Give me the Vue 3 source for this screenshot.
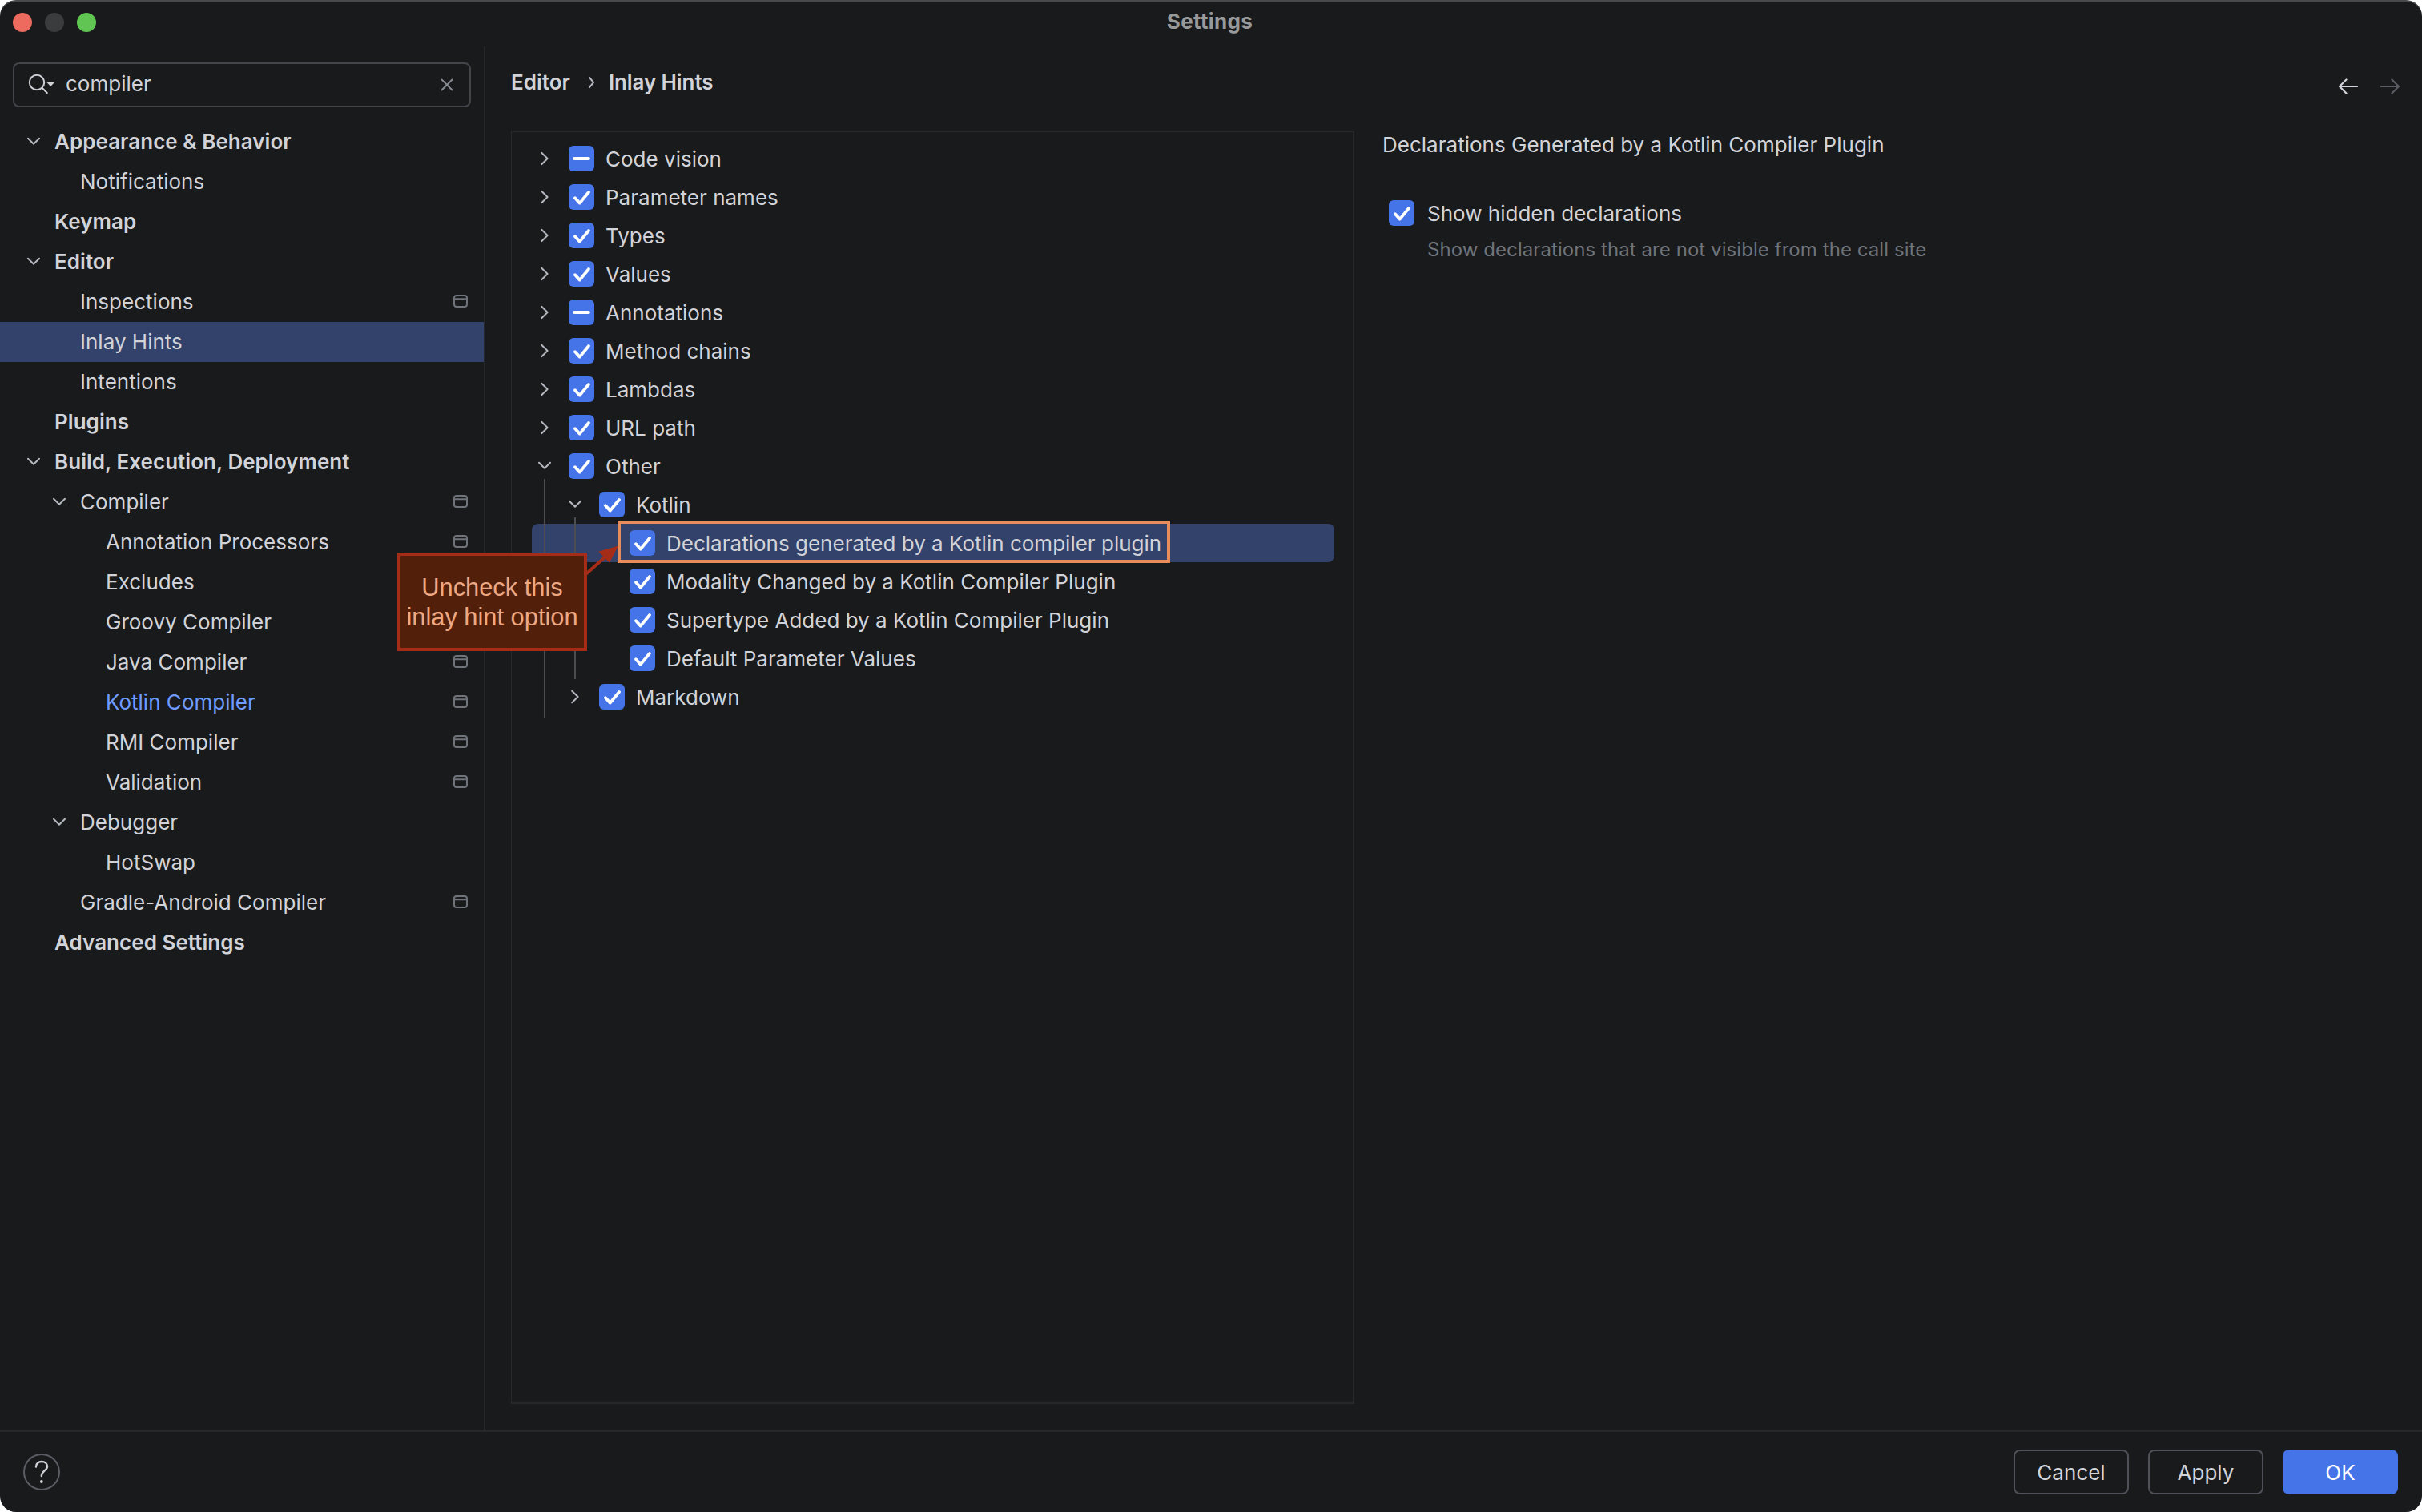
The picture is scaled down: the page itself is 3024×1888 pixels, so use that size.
<script setup>
import { ref } from 'vue'

const query = ref('compiler')

const pages = [
  { label: 'Appearance & Behavior', level: 0, open: true },
  { label: 'Notifications', level: 1 },
  { label: 'Keymap', level: 0 },
  { label: 'Editor', level: 0, open: true },
  { label: 'Inspections', level: 1, project: true },
  { label: 'Inlay Hints', level: 1, selected: true },
  { label: 'Intentions', level: 1 },
  { label: 'Plugins', level: 0 },
  { label: 'Build, Execution, Deployment', level: 0, open: true },
  { label: 'Compiler', level: 1, open: true, project: true },
  { label: 'Annotation Processors', level: 2, project: true },
  { label: 'Excludes', level: 2, project: true },
  { label: 'Groovy Compiler', level: 2, project: true },
  { label: 'Java Compiler', level: 2, project: true },
  { label: 'Kotlin Compiler', level: 2, project: true, match: true },
  { label: 'RMI Compiler', level: 2, project: true },
  { label: 'Validation', level: 2, project: true },
  { label: 'Debugger', level: 1, open: true },
  { label: 'HotSwap', level: 2 },
  { label: 'Gradle-Android Compiler', level: 1, project: true },
  { label: 'Advanced Settings', level: 0 },
]

const hints = [
  { label: 'Code vision', level: 0, arrow: 'right', state: 'mixed' },
  { label: 'Parameter names', level: 0, arrow: 'right', state: 'on' },
  { label: 'Types', level: 0, arrow: 'right', state: 'on' },
  { label: 'Values', level: 0, arrow: 'right', state: 'on' },
  { label: 'Annotations', level: 0, arrow: 'right', state: 'mixed' },
  { label: 'Method chains', level: 0, arrow: 'right', state: 'on' },
  { label: 'Lambdas', level: 0, arrow: 'right', state: 'on' },
  { label: 'URL path', level: 0, arrow: 'right', state: 'on' },
  { label: 'Other', level: 0, arrow: 'down', state: 'on' },
  { label: 'Kotlin', level: 1, arrow: 'down', state: 'on' },
  { label: 'Declarations generated by a Kotlin compiler plugin', level: 2, state: 'on', selected: true },
  { label: 'Modality Changed by a Kotlin Compiler Plugin', level: 2, state: 'on' },
  { label: 'Supertype Added by a Kotlin Compiler Plugin', level: 2, state: 'on' },
  { label: 'Default Parameter Values', level: 2, state: 'on' },
  { label: 'Markdown', level: 1, arrow: 'right', state: 'on' },
]
</script>

<template>
  <div class="window">
    <header class="titlebar">
      <div class="lights">
        <span class="light light--close"></span>
        <span class="light light--min"></span>
        <span class="light light--zoom"></span>
      </div>
      <h1>Settings</h1>
    </header>

    <div class="body">
      <aside class="sidebar">
        <label class="search">
          <svg class="search__icon" width="36" height="32" viewBox="0 0 36 32">
            <circle cx="11" cy="13" r="9.2" />
            <path d="M17.8 20L23.8 26" />
            <path class="search__caret" d="M23.5 13H33L28.2 18Z" />
          </svg>
          <input v-model="query" type="text" aria-label="Search settings" />
          <svg class="search__clear" width="16" height="16" viewBox="0 0 16 16">
            <path d="M1.5 1.5L14.5 14.5M14.5 1.5L1.5 14.5" />
          </svg>
        </label>

        <nav class="pages">
          <div
            v-for="page in pages"
            :key="page.label"
            class="page"
            :class="{ 'page--root': page.level === 0, 'page--selected': page.selected, 'page--match': page.match }"
            :style="{ '--level': page.level }"
          >
            <span class="page__arrow">
              <svg v-if="page.open" class="chevron" width="18" height="12" viewBox="0 0 18 12">
                <path d="M2 1.8L9 8.8L16 1.8" />
              </svg>
            </span>
            <span class="page__label">{{ page.label }}</span>
            <svg v-if="page.project" class="page__project" width="18" height="16" viewBox="0 0 18 16">
              <rect x="1" y="1" width="16" height="14" rx="3" />
              <path d="M1 5.2H17" />
            </svg>
          </div>
        </nav>
      </aside>

      <main class="content">
        <div class="crumbs">
          <span>Editor</span>
          <svg class="chevron" width="10" height="16" viewBox="0 0 10 16">
            <path d="M2 1.8L7 8L2 14.2" />
          </svg>
          <span class="crumbs__last">Inlay Hints</span>
          <svg class="history" width="24" height="20" viewBox="0 0 24 20">
            <path d="M23 10H1.5M9.5 1.5L1 10L9.5 18.5" />
          </svg>
          <svg class="history history--off" width="24" height="20" viewBox="0 0 24 20">
            <path d="M1 10H22.5M14.5 1.5L23 10L14.5 18.5" />
          </svg>
        </div>

        <div class="panes">
          <section class="hints">
            <div
              v-for="hint in hints"
              :key="hint.label"
              class="hint"
              :class="{ 'hint--selected': hint.selected }"
              :style="{ '--level': hint.level }"
            >
              <span class="hint__arrow">
                <svg v-if="hint.arrow === 'right'" class="chevron" width="12" height="18" viewBox="0 0 12 18">
                  <path d="M2.2 1.8L9.6 9L2.2 16.2" />
                </svg>
                <svg v-if="hint.arrow === 'down'" class="chevron" width="18" height="12" viewBox="0 0 18 12">
                  <path d="M2 1.8L9 8.8L16 1.8" />
                </svg>
              </span>
              <svg class="check" width="32" height="32" viewBox="0 0 32 32">
                <rect width="32" height="32" rx="6" />
                <path v-if="hint.state === 'on'" d="M8 17.2L13.8 23.6L25 10" />
                <path v-else d="M7 16H25" />
              </svg>
              <span class="hint__label">{{ hint.label }}</span>
            </div>
            <i class="guide guide--outer"></i>
            <i class="guide guide--inner"></i>
          </section>

          <section class="details">
            <h2>Declarations Generated by a Kotlin Compiler Plugin</h2>
            <div class="option">
              <svg class="check" width="32" height="32" viewBox="0 0 32 32">
                <rect width="32" height="32" rx="6" />
                <path d="M8 17.2L13.8 23.6L25 10" />
              </svg>
              <span>Show hidden declarations</span>
            </div>
            <p>Show declarations that are not visible from the call site</p>
          </section>
        </div>
      </main>
    </div>

    <footer class="footer">
      <svg class="help" width="46" height="46" viewBox="0 0 46 46">
        <circle cx="23" cy="23" r="22" />
        <path d="M16 16.5C16 12.5 19 10 23 10C27 10 30 12.5 30 16.2C30 21.5 22.8 21.5 22.8 28" />
        <circle class="help__dot" cx="22.8" cy="35" r="1.9" />
      </svg>
      <button class="btn">Cancel</button>
      <button class="btn">Apply</button>
      <button class="btn btn--primary">OK</button>
    </footer>

    <!-- annotation on top of the dialog -->
    <div class="highlight"></div>
    <svg class="pointer" width="44" height="44" viewBox="0 0 44 44">
      <path class="pointer__line" d="M2 38.5L25 18" />
      <path class="pointer__head" d="M42 3.5L17.3 10.8L31 24.8Z" />
    </svg>
    <div class="callout">Uncheck this<br />inlay hint option</div>
  </div>
</template>

<style>
body {
  margin: 0;
  background: #fff;
}
</style>

<style scoped>
.window {
  position: relative;
  display: flex;
  flex-direction: column;
  box-sizing: border-box;
  width: 3024px;
  height: 1888px;
  overflow: hidden;
  border-top: 2px solid #48494b;
  border-radius: 20px;
  color: #d1d3d9;
  background: #191a1c;
  font-family: Inter, 'Liberation Sans', sans-serif;
  font-size: 26px;
  letter-spacing: 0.01px;
}

svg {
  display: block;
  flex: none;
  fill: none;
  stroke-linecap: round;
  stroke-linejoin: round;
}

.titlebar {
  position: relative;
  display: flex;
  flex: none;
  align-items: center;
  height: 56px;
  padding-left: 16px;
}

.lights {
  display: flex;
  gap: 16px;
  margin-top: -4px;
}

.light {
  width: 24px;
  height: 24px;
  border-radius: 50%;
}

.light--close {
  background: #ec6a5e;
}

.light--min {
  background: #3b3c3e;
}

.light--zoom {
  background: #61c554;
}

.titlebar h1 {
  flex: 1;
  margin: -6px 131px 0 0;
  padding-left: 8px;
  color: #98999b;
  font-size: 26px;
  font-weight: 700;
  letter-spacing: 0.3px;
  line-height: 32px;
  text-align: center;
}

.body {
  display: flex;
  flex: 1;
  min-height: 0;
}

.sidebar {
  box-sizing: border-box;
  width: 606px;
  padding-top: 20px;
  border-right: 2px solid #27282b;
}

.search {
  display: flex;
  align-items: center;
  box-sizing: border-box;
  width: 572px;
  height: 56px;
  margin-left: 16px;
  padding: 0 20px 0 17px;
  border: 2px solid #43454a;
  border-radius: 8px;
}

.search__icon {
  stroke: #ced0d6;
  stroke-width: 2;
}

.search .search__caret {
  fill: #ced0d6;
  stroke: none;
}

.search input {
  flex: 1;
  min-width: 0;
  margin-left: 11px;
  padding: 0 0 3px;
  border: 0;
  outline: 0;
  color: inherit;
  background: none;
  font: inherit;
}

.search__clear {
  stroke: #868a91;
  stroke-width: 2;
}

.pages {
  margin-top: 18px;
}

.page {
  display: flex;
  align-items: center;
  height: 50px;
  padding-right: 20px;
  padding-left: calc(33px + var(--level) * 32px);
}

.page__arrow {
  width: 35px;
}

.page__label {
  flex: 1;
  line-height: 50px;
  white-space: nowrap;
}

.page--root {
  font-weight: 600;
  letter-spacing: 0.04px;
}

.page--selected {
  background: #33426b;
}

.page--match .page__label {
  color: #6f9bff;
}

.page__project {
  margin-top: -2px;
  stroke: #6f737a;
  stroke-width: 2;
}

.chevron {
  stroke: #b4b8bf;
  stroke-width: 2;
}

.content {
  display: flex;
  flex: 1;
  flex-direction: column;
  padding-left: 32px;
}

.crumbs {
  display: flex;
  align-items: center;
  height: 92px;
  margin-top: -2px;
  margin-bottom: 16px;
  padding-right: 28px;
  font-weight: 600;
}

.crumbs .chevron {
  margin: 2px 16px 0 22px;
}

.crumbs__last {
  flex: 1;
  letter-spacing: -0.1px;
}

.history {
  margin-top: 12px;
  stroke: #d1d3d9;
  stroke-width: 2.2;
}

.history--off {
  margin-left: 28px;
  stroke: #5a5d63;
}

.panes {
  display: flex;
  height: 1589px;
}

.hints {
  position: relative;
  box-sizing: border-box;
  width: 1053px;
  padding: 9px 0 0 25px;
  border: 1px solid #27282b;
  border-right-width: 2px;
  border-bottom-width: 2px;
}

.hint {
  display: flex;
  align-items: center;
  width: calc(1002px - var(--level) * 38px);
  height: 48px;
  padding-left: calc(var(--level) * 38px);
  border-radius: 8px;
}

.hint--selected {
  background: #33426b;
}

.hint__arrow {
  display: flex;
  justify-content: center;
  width: 32px;
  margin-right: 14px;
}

.hint__label {
  margin-left: 14px;
  white-space: nowrap;
}

.check rect {
  fill: #4573e8;
}

.check path {
  stroke: #fff;
  stroke-width: 3.8;
}

.guide {
  position: absolute;
  width: 2px;
  background: #4b4d51;
}

.guide--outer {
  top: 433px;
  left: 40px;
  height: 298px;
}

.guide--inner {
  top: 481px;
  left: 78px;
  height: 202px;
}

.details {
  padding-left: 35px;
}

.details h2 {
  margin: 0;
  font-size: 26px;
  font-weight: 400;
  line-height: 34px;
}

.option {
  display: flex;
  gap: 16px;
  align-items: center;
  margin: 52px 0 0 8px;
}

.details p {
  margin: 14px 0 0 56px;
  color: #6f737a;
  font-size: 24px;
  letter-spacing: 0.07px;
  line-height: 32px;
}

.footer {
  display: flex;
  gap: 24px;
  box-sizing: border-box;
  height: 102px;
  padding: 22px 30px 0 29px;
  border-top: 2px solid #27282b;
}

.help {
  margin: 5px auto 0 0;
  stroke: #5a5d63;
  stroke-width: 2;
}

.help path {
  stroke: #ced0d6;
  stroke-width: 2.4;
}

.help .help__dot {
  fill: #ced0d6;
  stroke: none;
}

.btn {
  width: 144px;
  height: 56px;
  padding: 0;
  border: 2px solid #4e5157;
  border-radius: 8px;
  color: #d1d3d9;
  background: none;
  font: inherit;
}

.btn--primary {
  border-color: #4573e8;
  color: #fff;
  background: #4573e8;
}

.highlight {
  position: absolute;
  top: 648px;
  left: 771px;
  box-sizing: border-box;
  width: 690px;
  height: 53px;
  border: 4px solid #e88c5c;
}

.pointer {
  position: absolute;
  top: 676px;
  left: 730px;
}

.pointer__line {
  stroke: #a52d18;
  stroke-width: 4;
}

.pointer__head {
  fill: #a52d18;
}

.callout {
  position: absolute;
  top: 688px;
  left: 496px;
  box-sizing: border-box;
  width: 237px;
  height: 123px;
  padding-top: 21px;
  border: 4px solid #a52d18;
  color: #eda883;
  background: #52200a;
  font-family: 'Liberation Sans', sans-serif;
  font-size: 30.8px;
  line-height: 37px;
  text-align: center;
  white-space: nowrap;
}
</style>
